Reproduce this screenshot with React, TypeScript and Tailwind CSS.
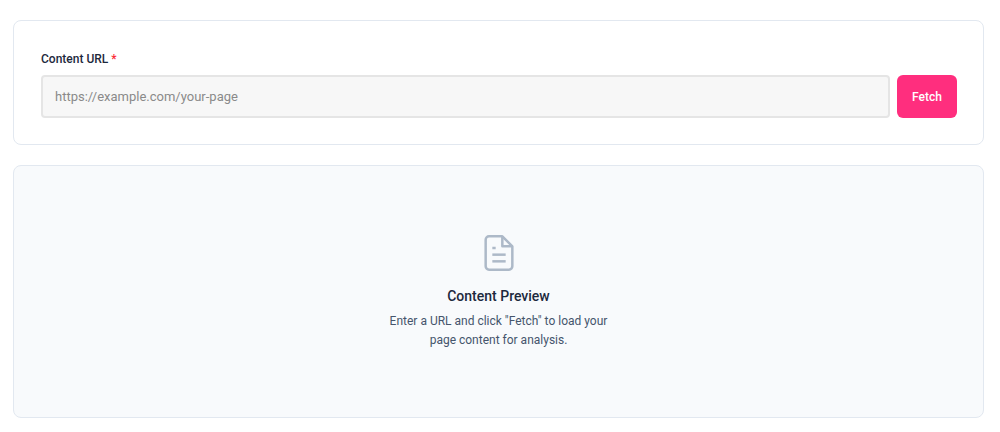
import React, { useState } from 'react';

const App: React.FC = () => {
  const [url, setUrl] = useState('');

  return (
    <div className="pl-[13px] pr-4 py-5 space-y-5 bg-white font-['Roboto','Inter',sans-serif]">
      {/* URL form */}
      <form
        className="rounded-lg border border-slate-200 bg-white pl-[27px] pr-[26px] pt-7 pb-[26px]"
        onSubmit={(e) => e.preventDefault()}
      >
        <label htmlFor="content-url" className="block mb-1.5 text-xs leading-5 font-medium text-slate-800">
          Content URL <span className="text-red-500">*</span>
        </label>
        <div className="flex gap-[7px]">
          <input
            id="content-url"
            type="url"
            value={url}
            onChange={(e) => setUrl(e.target.value)}
            placeholder="https://example.com/your-page"
            className="min-w-0 flex-1 h-[43px] px-3 border-2 border-[#e5e5e5] rounded-sm bg-[#f7f7f7] text-[13px] text-slate-800 placeholder:text-[#8a8a8a]"
          />
          <button type="submit" className="w-[60px] h-[43px] rounded-md bg-[#ff2e7e] text-xs font-medium text-white">
            Fetch
          </button>
        </div>
      </form>

      {/* Empty preview */}
      <section className="flex flex-col items-center rounded-lg border border-slate-200 bg-[#f8fafc] py-[67px] text-center">
        <svg
          className="w-10 h-10 text-[#adb9c8]"
          viewBox="0 0 24 24"
          fill="none"
          stroke="currentColor"
          strokeWidth="1.5"
          strokeLinejoin="round"
        >
          <path d="M14 2H6a2 2 0 0 0-2 2v16a2 2 0 0 0 2 2h12a2 2 0 0 0 2-2V8z" />
          <path d="M14 2v6h6" />
          <path d="M16 13H8" />
          <path d="M16 17H8" />
          <path d="M10 9H8" />
        </svg>
        <h3 className="mt-[13px] text-sm leading-5 font-medium text-slate-800">Content Preview</h3>
        <p className="mt-1.5 w-[240px] text-xs leading-[19px] text-slate-600">
          Enter a URL and click "Fetch" to load your page content for analysis.
        </p>
      </section>
    </div>
  );
};

export default App;
